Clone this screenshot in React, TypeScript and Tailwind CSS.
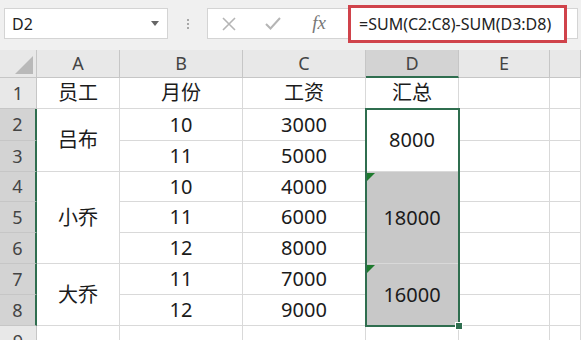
import React from "react";

function HeaderCell({ children, active }: { children?: React.ReactNode; active?: boolean }) {
  return (
    <div
      className={
        "flex items-center justify-center text-[18px] text-[#444] border-r border-[#c6c6c6] " +
        (active ? "bg-[#d3d3d3] border-b-2 border-b-[#2f6e4f]" : "bg-[#e8e8e8] border-b border-b-[#c6c6c6]")
      }
    >
      {children}
    </div>
  );
}

function RowHead({ n, active, style }: { n: number; active?: boolean; style?: React.CSSProperties }) {
  return (
    <div
      style={style}
      className={
        "flex items-center justify-center text-[18px] text-[#444] border-b border-[#c6c6c6] " +
        (active ? "bg-[#d3d3d3] border-r-2 border-r-[#2f6e4f]" : "bg-[#e8e8e8] border-r border-r-[#c6c6c6]")
      }
    >
      {n}
    </div>
  );
}

function Cell({
  children,
  row,
  col,
  span = 1,
  gray,
  tri,
}: {
  children?: React.ReactNode;
  row: number;
  col: number;
  span?: number;
  gray?: boolean;
  tri?: boolean;
}) {
  return (
    <div
      style={{ gridRow: `${row} / span ${span}`, gridColumn: `${col}` }}
      className={
        "relative flex items-center justify-center text-[20px] text-[#1b1b1b] border-r border-b border-[#d9d9d9] " +
        (gray ? "bg-[#c8c8c8]" : "bg-white")
      }
    >
      {tri && (
        <svg className="absolute left-[1px] top-[1px]" width="8" height="8" viewBox="0 0 8 8">
          <polygon points="0,0 8,0 0,8" fill="#1e7a2e" />
        </svg>
      )}
      {children}
    </div>
  );
}

export default function App() {
  const rowsData = [
    { b: "10", c: "3000" },
    { b: "11", c: "5000" },
    { b: "10", c: "4000" },
    { b: "11", c: "6000" },
    { b: "12", c: "8000" },
    { b: "11", c: "7000" },
    { b: "12", c: "9000" },
  ];
  return (
    <div className="w-[581px] h-[340px] overflow-hidden bg-[#f0f0f0] font-['Noto_Sans','Noto_Sans_CJK_SC',sans-serif]">
      {/* formula bar */}
      <div className="flex h-[50px] pt-[8px] pl-[4px] pr-[3px]">
        <div className="w-[164px] h-[31px] bg-white border border-[#d4d4d4] flex items-center justify-between pl-[7px] pr-[8px] text-[16px] text-[#222]">
          <span>D2</span>
          <svg width="8" height="5" viewBox="0 0 8 5">
            <polygon points="0,0 8,0 4,5" fill="#666" />
          </svg>
        </div>
        <div className="w-[39px] h-[31px] flex flex-col items-center justify-center gap-[2px]">
          <div className="w-[2px] h-[2px] bg-[#a8a8a8]" />
          <div className="w-[2px] h-[2px] bg-[#a8a8a8]" />
          <div className="w-[2px] h-[2px] bg-[#a8a8a8]" />
        </div>
        <div className="flex-1 h-[31px] bg-white border border-[#d4d4d4] flex items-center">
          <div className="w-[42px] flex justify-center">
            <svg width="14" height="14" viewBox="0 0 14 14">
              <path d="M1 1 L13 13 M13 1 L1 13" stroke="#b5b5b5" strokeWidth="1.6" />
            </svg>
          </div>
          <div className="w-[46px] flex justify-center">
            <svg width="16" height="13" viewBox="0 0 16 13">
              <path d="M1 7 L5.5 11.5 L15 1" stroke="#b5b5b5" strokeWidth="2" fill="none" />
            </svg>
          </div>
          <div className="w-[46px] flex justify-center font-['Liberation_Serif',serif] italic text-[19px] text-[#777]">
            fx
          </div>
          <div className="ml-[6px] w-[219px] h-[38px] shrink-0 border-[3px] border-[#d0434b] bg-white flex items-center pl-[8px] text-[16px] text-[#222] whitespace-nowrap">
            =SUM(C2:C8)-SUM(D3:D8)
          </div>
        </div>
      </div>

      {/* sheet */}
      <div className="relative grid grid-cols-[37px_83px_123px_123px_93px_91px_31px] grid-rows-[28px_31px_32px_31px_30px_31px_31px_31px_31px_31px]">
        <div className="relative bg-[#e8e8e8] border-r border-b border-[#c6c6c6]">
          <svg className="absolute right-[3px] bottom-[3px]" width="18" height="18" viewBox="0 0 18 18">
            <polygon points="18,0 18,18 0,18" fill="#b9b9b9" />
          </svg>
        </div>
        <HeaderCell>A</HeaderCell>
        <HeaderCell>B</HeaderCell>
        <HeaderCell>C</HeaderCell>
        <HeaderCell active>D</HeaderCell>
        <HeaderCell>E</HeaderCell>
        <HeaderCell />

        {[1, 2, 3, 4, 5, 6, 7, 8, 9].map((n) => (
          <RowHead key={n} n={n} active={n >= 2 && n <= 8} style={{ gridRow: n + 1, gridColumn: 1 }} />
        ))}

        {/* row 1 */}
        <Cell row={2} col={2}>员工</Cell>
        <Cell row={2} col={3}>月份</Cell>
        <Cell row={2} col={4}>工资</Cell>
        <Cell row={2} col={5}>汇总</Cell>
        <Cell row={2} col={6} />
        <Cell row={2} col={7} />

        {/* column A merges */}
        <Cell row={3} col={2} span={2}>吕布</Cell>
        <Cell row={5} col={2} span={3}>小乔</Cell>
        <Cell row={8} col={2} span={2}>大乔</Cell>

        {rowsData.map((r, i) => (
          <React.Fragment key={i}>
            <Cell row={i + 3} col={3}>{r.b}</Cell>
            <Cell row={i + 3} col={4}>{r.c}</Cell>
            <Cell row={i + 3} col={6} />
            <Cell row={i + 3} col={7} />
          </React.Fragment>
        ))}

        {/* column D merges */}
        <Cell row={3} col={5} span={2}>8000</Cell>
        <Cell row={5} col={5} span={3} gray tri>
          18000
        </Cell>
        <Cell row={8} col={5} span={2} gray tri>
          16000
        </Cell>

        {/* row 9 */}
        {[2, 3, 4, 5, 6, 7].map((c) => (
          <Cell key={c} row={10} col={c} />
        ))}

        {/* selection overlay */}
        <div className="absolute left-[365px] top-[58px] w-[95px] h-[219px] border-2 border-[#2f6e4f] pointer-events-none">
          <div className="absolute -right-[5px] -bottom-[5px] w-[8px] h-[8px] bg-[#2f6e4f] border border-white" />
        </div>
      </div>
    </div>
  );
}
